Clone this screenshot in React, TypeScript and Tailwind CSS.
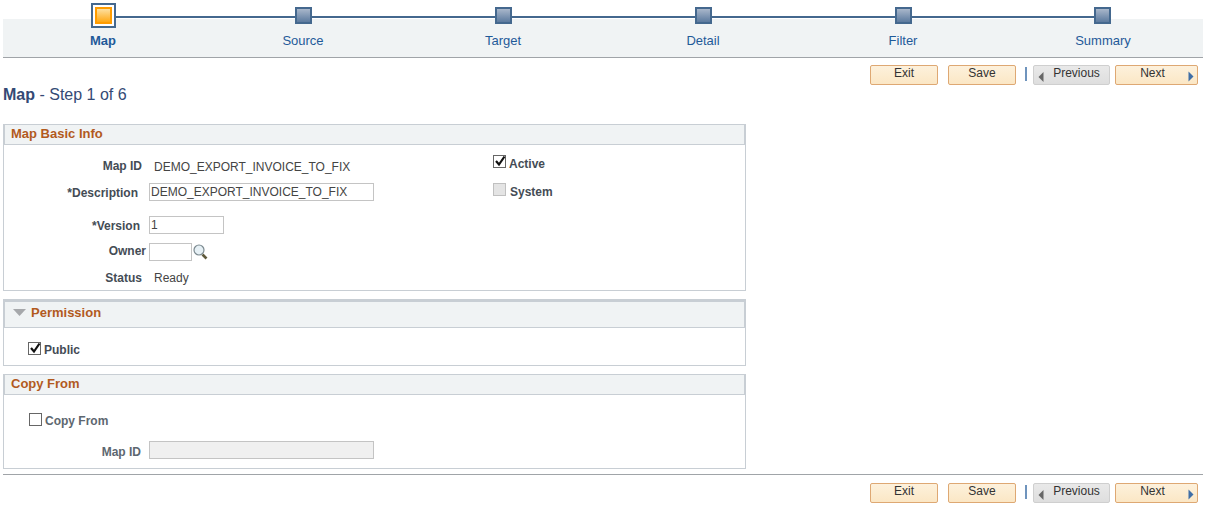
const steps = ["Map", "Source", "Target", "Detail", "Filter", "Summary"];

function Stepper() {
  return (
    <div className="ml-[3px] w-[1200px] h-[58px] border-b border-[#a0a4a8] grid grid-cols-6 bg-[linear-gradient(to_bottom,transparent_19px,#f0f3f4_19px)]">
      {steps.map((s, i) => (
        <div key={s} className="relative flex flex-col items-center">
          {i < 5 && <div className="absolute left-1/2 top-[16px] w-[200px] h-[2px] bg-[#44688e]" />}
          <div className={"relative h-[31px] flex items-center mb-[2px] " + (i === 5 ? "mr-[2px]" : "")}>
            {i === 0 ? (
              <div className="w-[25px] h-[25px] border-[2px] border-[#44688e] bg-white p-[2px]">
                <div className="w-full h-full border-[2px] border-[#ff9c00] bg-[linear-gradient(to_bottom,#fde0a0,#ffa814)]" />
              </div>
            ) : (
              <div className="w-[17px] h-[17px] border-[2px] border-[#44688e] bg-[linear-gradient(to_bottom,#a9b7cb,#5c7a9e)]" />
            )}
          </div>
          <div className={"text-[13px] leading-[15px] text-[#1f5a99] " + (i === 0 ? "font-bold" : "")}>{s}</div>
        </div>
      ))}
    </div>
  );
}

function Btn({ label, w, gray, arrow }: { label: string; w: string; gray?: boolean; arrow?: "left" | "right" }) {
  return (
    <div
      className={
        "relative h-[20px] rounded-[2px] border text-[12px] leading-[14px] text-[#333] text-center " +
        w +
        (gray
          ? " border-[#cfcfcf] bg-[linear-gradient(to_bottom,#e9e9e9,#dedede)]"
          : " border-[#dea873] bg-[linear-gradient(to_bottom,#fdf1dc,#fbe7c5)]")
      }
    >
      {label}
      {arrow === "left" && (
        <svg className="absolute left-[4px] top-[6px]" width="6" height="10" viewBox="0 0 6 10">
          <path d="M5.5 0 L0.5 5 L5.5 10 Z" fill="#666" />
        </svg>
      )}
      {arrow === "right" && (
        <svg className="absolute right-[3px] top-[5px]" width="6" height="11" viewBox="0 0 6 11">
          <path d="M0.5 0.5 L5.5 5.5 L0.5 10.5 Z" fill="#3f6ea6" />
        </svg>
      )}
    </div>
  );
}

function Toolbar() {
  return (
    <div className="flex items-start justify-end pr-[9px]">
      <Btn label="Exit" w="w-[68px]" />
      <div className="w-[10px]" />
      <Btn label="Save" w="w-[68px]" />
      <div className="w-[2px] h-[14px] mt-[2px] ml-[9px] mr-[6px] bg-[#6f94bd]" />
      <Btn label="Previous" w="w-[77px] pl-[10px]" gray arrow="left" />
      <div className="w-[5px]" />
      <Btn label="Next" w="w-[83px] pr-[8px]" arrow="right" />
    </div>
  );
}

function Check({ checked, disabled }: { checked?: boolean; disabled?: boolean }) {
  return (
    <div
      className={
        "relative w-[13px] h-[13px] -mt-[3px] border shrink-0 " +
        (disabled ? "border-[#c0c0c0] bg-[#e4e4e4]" : "border-[#666] bg-white")
      }
    >
      {checked && (
        <svg className="absolute left-[0px] top-[-1px]" width="12" height="12" viewBox="0 0 12 12">
          <path d="M2 6 L5 9.5 L10.5 1.5" fill="none" stroke="#111" strokeWidth="2.2" />
        </svg>
      )}
    </div>
  );
}

function Header({ title, tall }: { title: string; tall?: boolean }) {
  return (
    <div
      className={
        "flex items-center bg-[#f0f3f4] border-b border-x border-[#c8ced4] text-[13px] font-bold text-[#b25a1e] " +
        (tall ? "h-[28px] pl-[8px] pb-[4px] border-t-[2px] border-t-[#c8ced4]" : "h-[20px] pl-[6px] pb-[2px]")
      }
    >
      {tall && (
        <svg className="mr-[5px]" width="13" height="7" viewBox="0 0 13 7">
          <path d="M0 0 H13 L6.5 7 Z" fill="#a6a8ab" />
        </svg>
      )}
      {title}
    </div>
  );
}

function Row({ label, labelW, h, children }: { label: string; labelW: string; h: string; children: React.ReactNode }) {
  return (
    <div className={"flex items-center " + h}>
      <div className={"text-right text-[12px] font-bold text-[#444c55] " + labelW}>{label}</div>
      {children}
    </div>
  );
}

function TextBox({ w, value, disabled }: { w: string; value?: string; disabled?: boolean }) {
  return (
    <div
      className={
        "h-[18px] border border-[#c4c4c4] pl-[1px] text-[12px] leading-[16px] text-[#444] " +
        w +
        (disabled ? " bg-[#f0f0f0]" : " bg-white")
      }
    >
      {value}
    </div>
  );
}

function Lens() {
  return (
    <svg width="15" height="16" viewBox="0 0 15 16" className="ml-[1px]">
      <line x1="9.5" y1="10.5" x2="13.5" y2="14.5" stroke="#5f5a3c" strokeWidth="2.6" />
      <circle cx="6" cy="6" r="5" fill="#e6f0f5" stroke="#7c8a90" strokeWidth="1.2" />
    </svg>
  );
}

export default function App() {
  return (
    <div className="w-[1207px] h-[507px] bg-white overflow-hidden font-['Liberation_Sans',Arial,sans-serif]">
      <Stepper />
      <div className="mt-[7px]">
        <Toolbar />
      </div>
      <div className="pl-[3px] text-[16px] leading-[20px] text-[#344a75] h-[20px]">
        <span className="font-bold">Map</span> - Step 1 of 6
      </div>

      <div className="ml-[3px] w-[743px] mt-[19px] flex flex-col">
        <div className="h-[167px] border border-[#c8ced4]">
          <Header title="Map Basic Info" />
          <div className="flex">
            <div className="w-[489px] pt-[9px]">
              <Row label="Map ID" labelW="w-[138px] pb-[2px]" h="h-[25px]">
                <span className="ml-[12px] text-[12px] text-[#444]">DEMO_EXPORT_INVOICE_TO_FIX</span>
              </Row>
              <Row label="*Description" labelW="w-[134px] pt-[2px]" h="h-[26px]">
                <div className="ml-[11px]">
                  <TextBox w="w-[225px]" value="DEMO_EXPORT_INVOICE_TO_FIX" />
                </div>
              </Row>
              <div className="h-[6px]" />
              <Row label="*Version" labelW="w-[136px] pt-[2px]" h="h-[28px]">
                <div className="ml-[9px]">
                  <TextBox w="w-[75px]" value="1" />
                </div>
              </Row>
              <Row label="Owner" labelW="w-[142px] pb-[2px]" h="h-[26px]">
                <div className="ml-[3px]">
                  <TextBox w="w-[43px]" />
                </div>
                <Lens />
              </Row>
              <Row label="Status" labelW="w-[138px]" h="h-[26px]">
                <span className="ml-[12px] text-[12px] text-[#444]">Ready</span>
              </Row>
            </div>
            <div className="pt-[11px]">
              <div className="flex items-center gap-[3px] h-[14px] text-[12px] font-bold text-[#444c55]">
                <Check checked />
                <span className="pt-[2px]">Active</span>
              </div>
              <div className="flex items-center gap-[4px] h-[14px] mt-[14px] text-[12px] font-bold text-[#444c55]">
                <Check disabled />
                <span className="pt-[2px]">System</span>
              </div>
            </div>
          </div>
        </div>

        <div className="h-[67px] mt-[8px] border border-[#c8ced4]">
          <Header title="Permission" tall />
          <div className="flex items-center gap-[3px] pl-[24px] pt-[13px] text-[12px] font-bold text-[#444c55]">
            <Check checked />
            Public
          </div>
        </div>

        <div className="h-[95px] mt-[8px] border border-[#c8ced4]">
          <Header title="Copy From" />
          <div className="flex items-center gap-[3px] pl-[25px] pt-[17px] text-[12px] font-bold text-[#5d6770]">
            <Check />
            Copy From
          </div>
          <Row label="Map ID" labelW="w-[137px] pt-[4px] !text-[#5d6770]" h="h-[26px] mt-[7px]">
            <div className="ml-[8px]">
              <TextBox w="w-[225px]" disabled />
            </div>
          </Row>
        </div>
      </div>

      <div className="ml-[3px] w-[1200px] mt-[5px] border-t border-[#a0a4a8] pt-[8px]">
        <div className="-mr-[4px]">
          <Toolbar />
        </div>
      </div>
    </div>
  );
}
